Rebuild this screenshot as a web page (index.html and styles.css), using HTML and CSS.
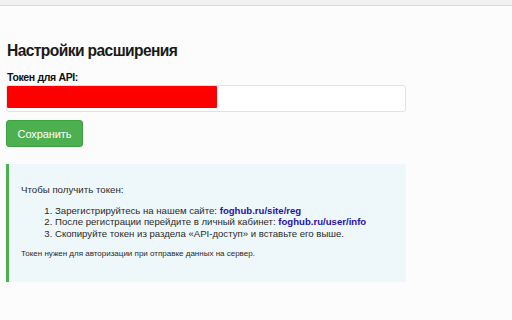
FILE: index.html
```html
<!DOCTYPE html>
<html lang="ru">
<head>
<meta charset="utf-8">
<link rel="stylesheet" href="styles.css">
</head>
<body>
<div class="topbar"></div>
<main class="page">
  <h1 class="title">Настройки расширения</h1>
  <label class="label" for="token">Токен для API:</label>
  <div class="input" id="token"><div class="mask"></div></div>
  <button class="btn">Сохранить</button>
  <div class="info">
    <p class="lead">Чтобы получить токен:</p>
    <ol class="steps">
      <li>Зарегистрируйтесь на нашем сайте: <a href="#">foghub.ru/site/reg</a></li>
      <li>После регистрации перейдите в личный кабинет: <a href="#">foghub.ru/user/info</a></li>
      <li>Скопируйте токен из раздела «API-доступ» и вставьте его выше.</li>
    </ol>
    <p class="note">Токен нужен для авторизации при отправке данных на сервер.</p>
  </div>
</main>
</body>
</html>
```

FILE: styles.css
```css
html, body {
  margin: 0;
  padding: 0;
  background: #fbfcfb;
  font-family: "Liberation Sans", Arial, sans-serif;
  color: #222;
}
.topbar {
  height: 5px;
  background: #f1f1f0;
  border-bottom: 1px solid #d8d8d8;
}
.page {
  padding: 0 6px;
  width: 400px;
}
.title {
  margin: 34px 0 0 1px;
  font-size: 15.6px;
  letter-spacing: -0.6px;
  line-height: 22px;
  font-weight: bold;
  color: #1a1a1a;
}
.label {
  display: block;
  margin: 8px 0 0 1px;
  font-size: 10.5px;
  letter-spacing: -0.35px;
  line-height: 14px;
  font-weight: bold;
  color: #111;
}
.input {
  box-sizing: border-box;
  margin-top: 1px;
  height: 27px;
  border: 1px solid #e2e2e2;
  border-radius: 3px;
  background: #fff;
  padding: 0;
}
.mask {
  width: 210px;
  height: 22px;
  background: #ff0000;
  border-radius: 1px;
}
.btn {
  display: block;
  margin-top: 8px;
  width: 77px;
  height: 27px;
  border: 1px solid #3e9f42;
  border-radius: 3px;
  background: #4caf50;
  color: #fff;
  font-family: "Liberation Sans", Arial, sans-serif;
  font-size: 11px;
  letter-spacing: -0.1px;
  padding: 0;
}
.info {
  margin-top: 17px;
  height: 118px;
  box-sizing: border-box;
  background: #eef7fa;
  border-left: 3px solid #4caf50;
  padding: 20px 12px 0 12px;
  font-size: 9.7px;
  color: #2a2a2a;
}
.lead {
  margin: 0;
  line-height: 12px;
}
.steps {
  margin: 9px 0 0 0;
  padding-left: 34px;
  line-height: 11.3px;
  font-size: 9.6px;
}
.steps a {
  color: #2a12a8;
  font-weight: bold;
  text-decoration: none;
}
.note {
  margin: 10px 0 0 0;
  font-size: 8px;
  line-height: 10px;
}
```
